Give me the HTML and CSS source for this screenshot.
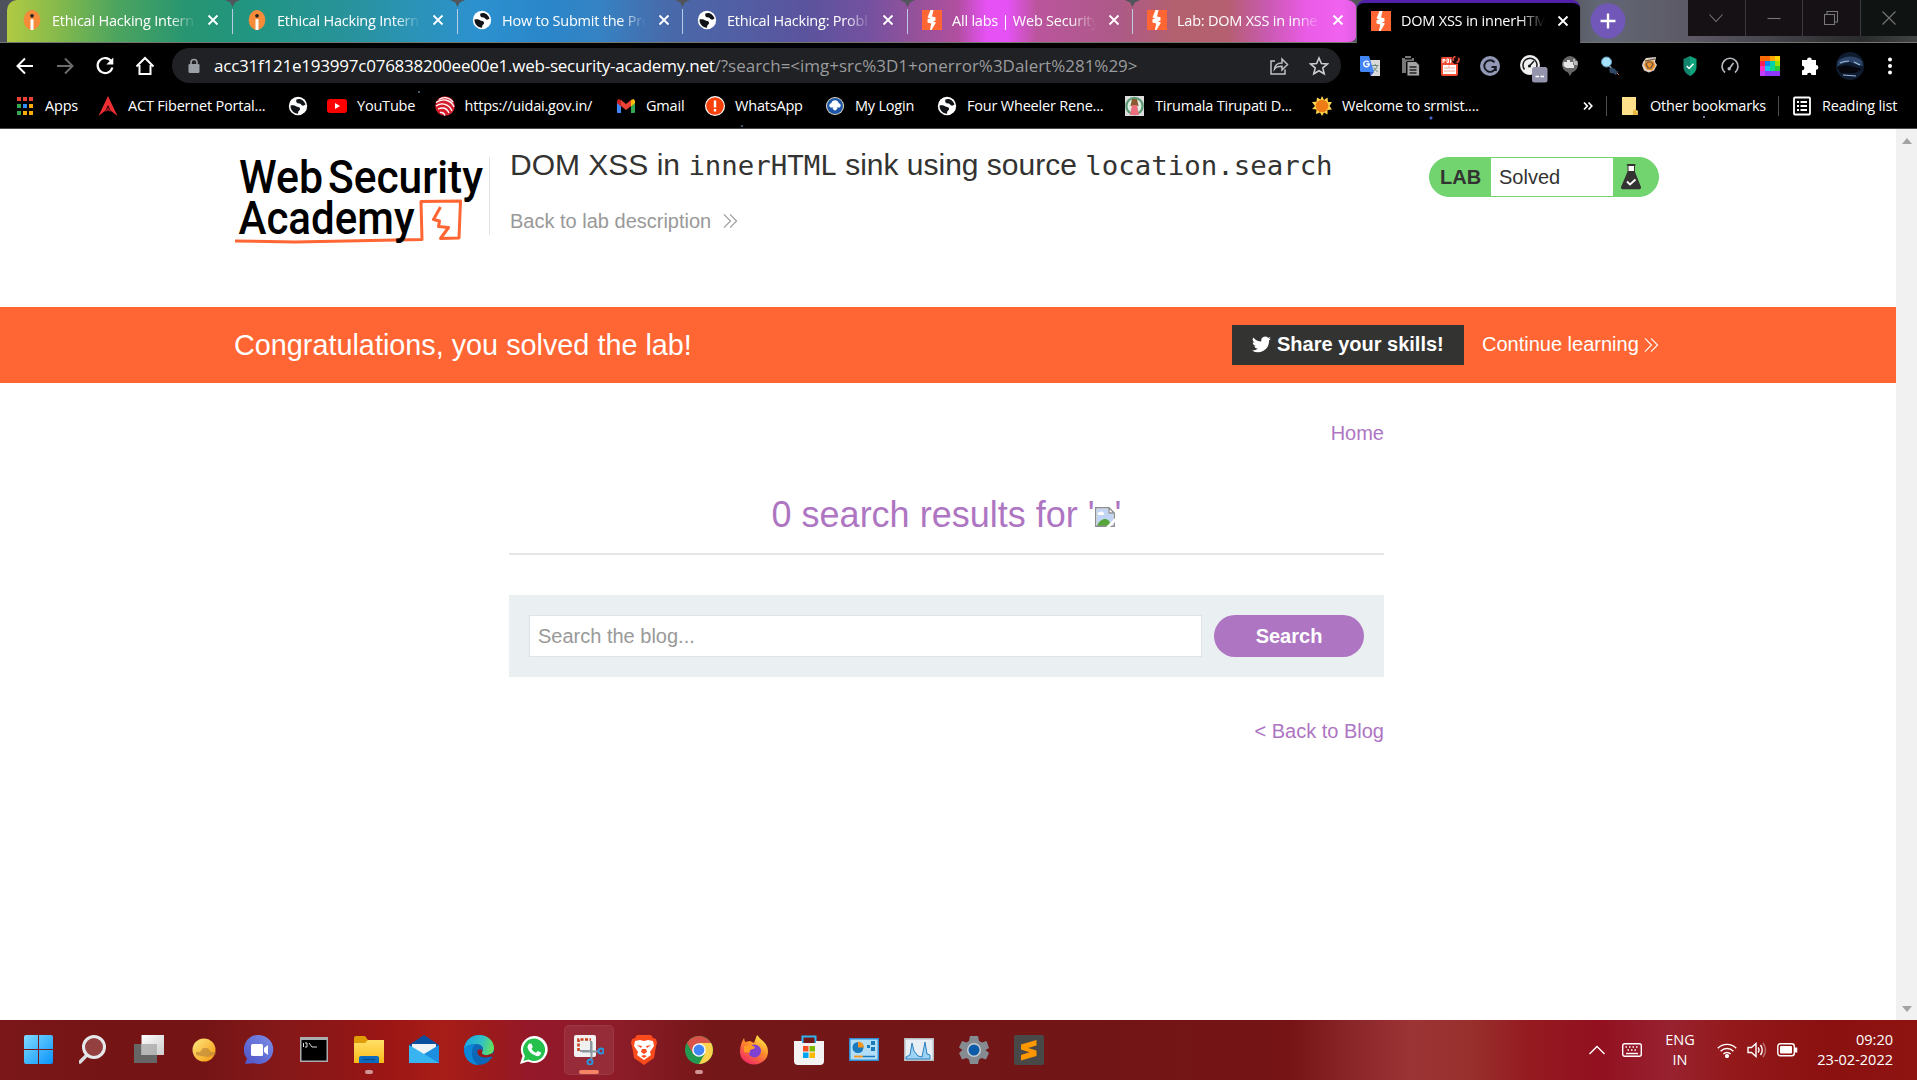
FILE: index.html
```html
<!DOCTYPE html>
<html lang="en">
<head>
<meta charset="utf-8">
<title>DOM XSS in innerHTML sink using source location.search</title>
<link rel="stylesheet" href="styles.css">
</head>
<body>
<svg class="defs" width="0" height="0">
  <defs>
    <linearGradient id="gwin" x1="0" y1="0" x2="1" y2="1"><stop offset="0" stop-color="#7fdcff"/><stop offset="1" stop-color="#0a93fb"/></linearGradient>
    <linearGradient id="gsun" x1="0" y1="0" x2="1" y2="1"><stop offset="0" stop-color="#ffe681"/><stop offset="1" stop-color="#f59a0c"/></linearGradient>
    <linearGradient id="gchat" x1="1" y1="0" x2="0" y2="1"><stop offset="0" stop-color="#7b8fe8"/><stop offset="1" stop-color="#4f52c4"/></linearGradient>
    <linearGradient id="gfold" x1="0" y1="0" x2="0" y2="1"><stop offset="0" stop-color="#ffe067"/><stop offset="1" stop-color="#fbbb18"/></linearGradient>
    <linearGradient id="gedge" x1="0" y1=".3" x2="1" y2=".5"><stop offset="0" stop-color="#1ca6e6"/><stop offset=".6" stop-color="#35c3c0"/><stop offset="1" stop-color="#66e05a"/></linearGradient>
    <linearGradient id="gfox" x1=".8" y1="0" x2=".2" y2="1"><stop offset="0" stop-color="#fff04a"/><stop offset=".45" stop-color="#ff8a2a"/><stop offset="1" stop-color="#f0206a"/></linearGradient>
    <linearGradient id="gtask" x1="0" y1="0" x2="1" y2="1"><stop offset="0" stop-color="#fff"/><stop offset="1" stop-color="#ccc"/></linearGradient>
    <symbol id="burp" viewBox="0 0 20 20"><path fill="#f63" d="M0 0h20v20H0z"/><path fill="#fff" d="M8.500 0h3L10 6.500l3.500.7v3.300l-2.500 1L14 12.500 9.500 20H8l1.200-6.500-3.700-1V9.200l2.700-1L5.500 7.500z"/></symbol>
    <symbol id="globe" viewBox="0 0 20 20"><circle cx="10" cy="10" r="9.200" fill="#fff"/><path fill="#101418" d="M8.500 3.500C11 2 16 3.500 17.500 8.500c-1.500 1.500-3.500 1.500-4.500 0-.5-1.200-3.500-.3-4.500-2.200-.3-1-.5-2 0-2.800zM2.500 9.500c2.500-.8 5 0 6.500 1.300 2 .2 3.500 1.200 3 2.700-.5 1-1.700 1.200-1.800 2.500l-.2 1.800C5.500 17.500 2.500 14 2.500 9.500z"/></symbol>
    <symbol id="intern" viewBox="0 0 20 24"><ellipse cx="10" cy="12" rx="10" ry="12" fill="#f68b3a"/><circle cx="10" cy="7" r="2.200" fill="#222"/><path fill="#fff" d="M8.200 11h3.600v13H8.200z"/></symbol>
    <symbol id="x" viewBox="0 0 12 12"><path d="M1.500 1.500l9 9m0-9l-9 9" stroke="#fff" stroke-width="1.800" fill="none"/></symbol>
  </defs>
</svg>

<div class="tabstrip">
  <div class="tabs">
    <div class="tab"><svg class="fav"><use href="#intern"/></svg><span class="title">Ethical Hacking Intern</span><svg class="close"><use href="#x"/></svg></div>
    <div class="tab"><svg class="fav"><use href="#intern"/></svg><span class="title">Ethical Hacking Intern</span><svg class="close"><use href="#x"/></svg></div>
    <div class="tab"><svg class="fav"><use href="#globe"/></svg><span class="title">How to Submit the Pro</span><svg class="close"><use href="#x"/></svg></div>
    <div class="tab"><svg class="fav"><use href="#globe"/></svg><span class="title">Ethical Hacking: Probl</span><svg class="close"><use href="#x"/></svg></div>
    <div class="tab"><svg class="fav"><use href="#burp"/></svg><span class="title">All labs | Web Security</span><svg class="close"><use href="#x"/></svg></div>
    <div class="tab"><svg class="fav"><use href="#burp"/></svg><span class="title">Lab: DOM XSS in inne</span><svg class="close"><use href="#x"/></svg></div>
  </div>
  <div class="tab active"><svg class="fav"><use href="#burp"/></svg><span class="title">DOM XSS in innerHTM</span><svg class="close"><use href="#x"/></svg></div>
  <svg class="newtab" viewBox="0 0 36 36"><circle cx="18" cy="18" r="17.500" fill="#7057b8"/><path d="M10.500 18h15M18 10.500v15" stroke="#fff" stroke-width="2.400"/></svg>
  <div class="winbtns">
    <div><svg width="14" height="12" viewBox="0 0 14 12"><path d="M.5 2.500 7 9.500l6.500-7"/></svg></div>
    <div><svg width="14" height="12" viewBox="0 0 14 12"><path d="M.5 6.500h13"/></svg></div>
    <div><svg width="14" height="14" viewBox="0 0 14 14"><path d="M.5 3.500h10v10H.5zM3 3.500V.500h10.500V11h-3"/></svg></div>
    <div><svg width="14" height="14" viewBox="0 0 14 14"><path d="M.5.500l13 13m0-13l-13 13"/></svg></div>
  </div>
</div>

<div class="toolbar">
  <div class="nav">
    <svg viewBox="0 0 20 20"><path d="M18 10H3M10 2.500 2.500 10l7.500 7.500" stroke="#fff" stroke-width="2" fill="none"/></svg>
    <svg viewBox="0 0 20 20"><path d="M2 10h15M10 2.500l7.500 7.500-7.500 7.500" stroke="#6c6c6c" stroke-width="2" fill="none"/></svg>
    <svg viewBox="0 0 20 20"><path d="M16.300 5.200A7.500 7.500 0 1 0 17.400 11.500" stroke="#fff" stroke-width="2.200" fill="none"/><path d="M18.300 1.500v7h-7z" fill="#fff"/></svg>
    <svg viewBox="0 0 20 20"><path d="M4.500 9v9h11V9M1.500 10.500 10 2l8.500 8.500" stroke="#fff" stroke-width="2" fill="none"/></svg>
  </div>
  <div class="omnibox">
    <svg class="lock" viewBox="0 0 12 16"><path d="M3 7V4.500a3 3 0 0 1 6 0V7" fill="none" stroke="#9aa0a6" stroke-width="1.600"/><rect x=".5" y="6" width="11" height="9" rx="1.300" fill="#9aa0a6"/></svg>
    <span class="url"><span class="host">acc31f121e193997c076838200ee00e1.web-security-academy.net</span><span class="path">/?search=&lt;img+src%3D1+onerror%3Dalert%281%29&gt;</span></span>
    <svg class="share" viewBox="0 0 20 20"><path d="M6 5H2v13h14v-4.500M5.500 13c.5-4.500 3.500-6 7.500-6V3l5.500 5.500L13 14v-3.700c-4 0-6 .7-7.500 2.700z" fill="none" stroke="#bdc1c6" stroke-width="1.500"/></svg>
    <svg class="star" viewBox="0 0 20 20"><path d="M10 2l2.400 5.500 6 .5-4.600 3.900 1.400 5.900L10 14.700l-5.200 3.100 1.400-5.900L1.600 8l6-.5z" fill="none" stroke="#c8cbd0" stroke-width="1.600"/></svg>
  </div>
  <div class="exts">
    <svg viewBox="0 0 20 20"><path fill="#dadada" d="M7 4h13v16H11z"/><path d="M12 9.500h6.500M15.300 8v1.500m2 0c-.5 3-2.500 5-5 6m1.500-4c.8 2 2.200 3.200 4 4" stroke="#687" fill="none"/><path fill="#4285f4" d="M0 0h9l5 16H1.500Q0 16 0 14.500z"/><path fill="#3157c9" d="M9.500 16H14l-3.500 4z"/><path d="M8.700 6.200A2.800 2.800 0 1 0 9.300 8H6.500" stroke="#fff" stroke-width="1.400" fill="none"/></svg>
    <svg viewBox="0 0 20 20"><path fill="#777" d="M2 2h3V0h6v2h3v4H6v11H2z"/><path fill="#111" d="M5 2h7v1.500H5z"/><path fill="#a4a4a4" stroke="#111" d="M7 5.500h9l3.500 3.500v11H7z"/><path d="M9.500 11h7M9.500 14h7M9.500 17h7" stroke="#222" stroke-width="1.300"/></svg>
    <svg viewBox="0 0 20 20"><rect x="1" y="1" width="17" height="19" rx="2" fill="#f04e37"/><path fill="#fff" d="M3 9h13v9H3z"/><path d="M4 12h11M4 15h11M9 9v3" stroke="#f7a79b"/><path d="M3 3v4M3 3.500h2v1.500H3M7 3v3.500h1.500V3zM10.500 7V3.500h2M10.500 5h2" stroke="#fff" fill="none"/><circle cx="16" cy="3.500" r="4.500" fill="#180505"/><path d="M13.500 5c-1-2 0-4 2-4.500M18.500 2c1 2 0 4-2 4.500" stroke="#e34a36" stroke-width="1.700" fill="none"/></svg>
    <svg viewBox="0 0 20 20"><circle cx="10" cy="10" r="10" fill="#9298b5"/><path d="M14.500 6.300A5.800 5.800 0 1 0 15.800 11h-4.300M15.800 11v4" stroke="#151823" stroke-width="1.900" fill="none"/></svg>
    <svg class="wide" viewBox="0 0 28 28"><circle cx="10" cy="10" r="10" fill="#f0f0f0"/><path d="M4.500 14.500A7 7 0 1 1 15.500 14.500M9.500 11l4.500-5" stroke="#16191c" stroke-width="1.500" fill="none"/><circle cx="9.500" cy="11" r="1.600" fill="#16191c"/><rect x="12" y="12" width="15.500" height="15.500" rx="2.500" fill="#9495ad"/><path d="M15.500 21.500h3.500M20.500 21.500H24" stroke="#fff" stroke-width="1.700"/></svg>
    <svg viewBox="0 0 20 20"><path fill="#666" d="M10 0a9 8.500 0 0 1 2 16.500L10 20l-2-3.500A9 8.500 0 0 1 10 0z"/><path fill="#e5e5e5" d="M3.500 6H7V4h3v2h3v3h1v3H6.500L3.500 10z"/><path fill="#bbb" d="M13 3h2v2h2.500v4H14z"/></svg>
    <svg viewBox="0 0 20 20"><circle cx="6.500" cy="6" r="5" fill="#a5e1fb" stroke="#6599b8"/><path d="M9.500 10l2 2.500" stroke="#8b9aa5" stroke-width="1.500"/><path fill="#2f4965" d="M9 13l3-1.500 3 1.500 2 2.500h2l-2 1.500-1 2.500-2-2-4-.5z"/><path d="M17 17l2 2" stroke="#d66b32"/></svg>
    <svg viewBox="0 0 20 20"><path fill="#e0d2c2" d="M3 6l3-4 5-.500 5-.500-1 5 2 3-3 5.500-5 2-5-2-2-5z"/><path d="M6 4l7.500 1 2 5-3.500 4.500-5.500-1L4 9z" fill="#ec932f"/><path d="M6 8c2-3 5-3 7 0l-2 4H8zM5 5l10-2" stroke="#5f5045" stroke-width="1.200" fill="none"/></svg>
    <svg viewBox="0 0 20 20"><path fill="#0ea37a" d="M10 0l6.500 3v8c0 4.500-3 7-6.500 9z"/><path fill="#12836c" d="M10 0L3.500 3v8c0 4.500 3 7 6.500 9z"/><path d="M6.700 10l2.400 2.500 4.400-4.800" stroke="#fff" stroke-width="1.500" fill="none"/></svg>
    <svg viewBox="0 0 20 20"><path d="M5 16.500A8 8 0 1 1 15 16.500M9 13l4.500-6" stroke="#b5b8be" stroke-width="1.700" fill="none"/><circle cx="9.200" cy="12.800" r="1.700" fill="#b5b8be"/></svg>
    <svg viewBox="0 0 20 20"><path fill="#f22" d="M0 0h5v5H0z"/><path fill="#ff6a00" d="M0 0h10v5H0z"/><path fill="#ffa800" d="M10 0h5v5h-5z"/><path fill="#ffd400" d="M15 0h5v5h-5z"/><path fill="#ff1d55" d="M0 5h5v5H0z"/><path fill="#0a84ff" d="M5 5h5v5H5z"/><path fill="#00cfae" d="M10 5h5v5h-5z"/><path fill="#98e000" d="M15 5h5v5h-5z"/><path fill="#f72bc5" d="M0 10h5v5H0z"/><path fill="#17bdf4" d="M5 10h5v5H5z"/><path fill="#0bd98c" d="M10 10h5v5h-5z"/><path fill="#29cd33" d="M15 10h5v5h-5z"/><path fill="#c43dff" d="M0 15h5v5H0z"/><path fill="#8f36ff" d="M5 15h15v5H5z"/></svg>
    <svg viewBox="0 0 20 20"><path fill="#fff" d="M2 4h5a2.400 2.400 0 0 1 4.800 0H16v5a2.400 2.400 0 0 1 0 4.800V19h-4.500a2.200 2.200 0 0 0-4.400 0H2v-4.500a2.400 2.400 0 0 0 0-4.800z"/></svg>
    <svg class="wide avatar" viewBox="0 0 28 28"><circle cx="14" cy="14" r="14" fill="#0f1b2e"/><path fill="#2c4468" d="M2 9C8 3 20 3 26 9l1 5-5-1-8-3-9 2-4 3z"/><path fill="#05070c" d="M1 15l9-2 16 4-7 4H5z"/><path d="M4 11c4-2 7-2 9-2M18 10l6 3M7 23l13 1" stroke="#9fb9dd" stroke-width="1.200" fill="none"/></svg>
    <svg viewBox="0 0 20 20"><circle cx="10" cy="3.500" r="2" fill="#fff"/><circle cx="10" cy="10" r="2" fill="#fff"/><circle cx="10" cy="16.500" r="2" fill="#fff"/></svg>
  </div>
</div>

<div class="bookmarks">
  <div class="bm"><svg viewBox="0 0 20 20"><path fill="#ea4335" d="M2 1h4v4H2zm6 0h4v4H8zm6 0h4v4h-4z"/><path fill="#34a853" d="M2 8h4v4H2zM2 15h4v4H2z"/><path fill="#2f8df5" d="M8 8h4v4H8z"/><path fill="#fbab05" d="M14 8h4v4h-4zM8 15h4v4H8zm6 0h4v4h-4z"/></svg><span>Apps</span></div>
  <div class="bm"><svg viewBox="0 0 20 20"><path fill="#ee2e33" d="M10 0l9.500 20-7-5.500L10 9l-2.500 5.500L.5 20z"/><path fill="#b3191f" d="M10 11l3 5-3-1.500L7 16z"/></svg><span>ACT Fibernet Portal...</span></div>
  <div class="bm"><svg><use href="#globe"/></svg></div>
  <div class="bm"><svg viewBox="0 0 20 20"><rect y="3" width="20" height="14" rx="3" fill="red"/><path fill="#fff" d="M8 7v6l5-3z"/></svg><span>YouTube</span></div>
  <div class="bm"><svg viewBox="0 0 20 20"><circle cx="10" cy="10" r="9.800" fill="#d3202c"/><path d="M1 6.500C8 1.500 16 4 19 11M1 10c6-4 13-2 16 5M3 13c5-2 9-.500 11 4M5 16.500c3-.500 4 .5 5 3M4 3.500C9 0 15 2 18 6" stroke="#fff" stroke-width="1.300" fill="none"/></svg><span>https://uidai.gov.in/</span></div>
  <div class="bm"><svg viewBox="0 0 20 20"><path fill="#4285f4" d="M1 5l4 3v9H2q-1 0-1-1z"/><path fill="#34a853" d="M19 5l-4 3v9h3q1 0 1-1z"/><path fill="#fbbc04" d="M15 4l2.500-1L19 4.500V7l-4 3.500z"/><path fill="#c5221f" d="M5 4L2.500 3 1 4.500V7l4 3.500z"/><path fill="#ea4335" d="M5 4l5 4 5-4v6l-5 4-5-4z"/></svg><span>Gmail</span></div>
  <div class="bm"><svg viewBox="0 0 20 20"><circle cx="10" cy="10" r="10" fill="#fff"/><circle cx="10" cy="10" r="8.800" fill="#f8400b"/><path fill="#fff" d="M8.800 4.500h2.400v7H8.800zM8.800 13h2.400v2.400H8.800z"/></svg><span>WhatsApp</span></div>
  <div class="bm"><svg viewBox="0 0 20 20"><circle cx="10" cy="10" r="9" fill="#e9ddc0"/><circle cx="10" cy="10" r="8" fill="#1d56a8"/><path fill="#fff" d="M5.500 11.500a2.300 2.300 0 0 1 .8-4.300 3.800 3.800 0 0 1 7.400 0 2.300 2.300 0 0 1 .8 4.300h-3l1 1.200-2.500 2-2.500-2 1-1.200z"/></svg><span>My Login</span></div>
  <div class="bm"><svg><use href="#globe"/></svg><span>Four Wheeler Rene...</span></div>
  <div class="bm"><svg viewBox="0 0 20 20"><path fill="#ddd" d="M0 0h19v20H0z"/><circle cx="9.500" cy="10" r="9.300" fill="#5f9b79"/><circle cx="9.500" cy="10" r="7" fill="#dcefe0"/><path fill="#8a5a31" d="M7 3h5l1.500 7h-8z"/><path fill="#ec6f7e" d="M7 9h5l2 10H5z"/></svg><span>Tirumala Tirupati D...</span></div>
  <div class="bm"><svg viewBox="0 0 20 20"><path fill="#ffd34d" d="M10 0l2 4 3.500-2.500.5 4.500 4 0-2.500 4 2.500 3.500-4.500.5 0 4.500-3.500-2L10 20l-2-3.500L4 18l.5-4.500L0 13l3-3L0 6l4.500-.2L5 1.500l3.500 2z"/><circle cx="10" cy="10" r="6.300" fill="#ef7d15"/></svg><span>Welcome to srmist....</span></div>
  <div class="more"><svg viewBox="0 0 10 10"><path d="M1 1.500 4.300 5 1 8.500M5.500 1.500 8.800 5 5.500 8.500" fill="none" stroke="#fff" stroke-width="1.700"/></svg></div>
  <div class="bm side"><svg viewBox="0 0 20 20"><path fill="#ffe08a" d="M2 1h14v13l2 1v4H2z"/><path fill="#e9b93f" d="M13 19v-4l3-2v4l2-3v5z"/></svg><span>Other bookmarks</span></div>
  <div class="bm side"><svg viewBox="0 0 20 20"><rect x="2" y="1.500" width="16" height="17" rx="1" fill="none" stroke="#fff" stroke-width="1.800"/><path d="M5 6h2M5 10h2M5 14h2M8.500 6H15M8.500 10H15M8.500 14H15" stroke="#fff" stroke-width="1.800"/></svg><span>Reading list</span></div>
</div>

<div class="viewport">
  <main class="page">
    <header class="labhead">
      <svg class="logo" width="256" height="95" viewBox="0 0 256 95">
        <path d="M0 90 60 91 187 88.500 186 50.500 225.500 50 224 87 205.500 87.500 213.500 76.500 203.500 75.500 204.500 70 198.500 68.500 205.500 56" class="mark"/>
        <text class="logotext" x="4" y="41.500" textLength="84" lengthAdjust="spacingAndGlyphs">Web</text>
        <text class="logotext" x="93" y="41.500" textLength="155" lengthAdjust="spacingAndGlyphs">Security</text>
        <text class="logotext" x="3.500" y="83" textLength="176" lengthAdjust="spacingAndGlyphs">Academy</text>
      </svg>
      <div class="headtext">
        <h2>DOM XSS in <code>innerHTML</code> sink using source <code>location.search</code></h2>
        <a class="back">Back to lab description <svg viewBox="0 0 16 16"><path d="M1 1l7 7-7 7M7.500 1l7 7-7 7"/></svg></a>
      </div>
      <div class="status">
        <span class="lab">LAB</span><span class="solved">Solved</span>
        <svg viewBox="0 0 20 26"><path fill="#fff" stroke="#333332" d="M7 1.500h6.500v6H7z"/><path fill="#333332" d="M5.800 0h8.700v1.500H5.800zM6.800 7h6.800L20 23q.3 2-1.500 2.200h-17Q-.3 25 0 23z"/><path d="M6 17.500l3 3 5.500-5" stroke="#fff" stroke-width="1.800" fill="none"/></svg>
      </div>
    </header>
    <section class="banner">
      <h4>Congratulations, you solved the lab!</h4>
      <button class="sharebtn"><svg viewBox="0 0 24 20"><path fill="#fff" d="M24 2.400a10 10 0 0 1-2.800.8A5 5 0 0 0 23.300.4a10 10 0 0 1-3.100 1.200 4.900 4.900 0 0 0-8.400 4.500A14 14 0 0 1 1.700 1a4.900 4.900 0 0 0 1.500 6.600A5 5 0 0 1 1 7a4.900 4.900 0 0 0 3.900 4.900 5 5 0 0 1-2.200.1 4.900 4.900 0 0 0 4.600 3.400A10 10 0 0 1 0 17.500 14 14 0 0 0 21.500 5a10 10 0 0 0 2.500-2.600z"/></svg>Share your skills!</button>
      <a class="continue">Continue learning <svg viewBox="0 0 16 16"><path d="M1 1l7 7-7 7M7.500 1l7 7-7 7"/></svg></a>
    </section>
    <section class="blog">
      <a class="home">Home</a>
      <h1>0 search results for '<svg viewBox="0 0 20 20"><path fill="#fff" d="M.5.500H14L19.500 6v14H.5z"/><path fill="#c3d5f5" d="M2 2h11v5h5v11H2z"/><path fill="#fff" d="M3 8a2 2 0 0 1 2-3 2.500 2.500 0 0 1 4 2q1 1 0 1z"/><path fill="#57a639" d="M2 19c2-5 5-7 8-7 3 0 5 2 6 7z"/><path fill="none" stroke="#8b8f94" stroke-width="1.400" d="M.7 19.300V.7H14l5.300 5.300v13.300zM14 .7V6h5.300"/><path fill="#fff" d="M20 11v4l-5 5h-4z"/></svg>'</h1>
      <form class="search"><input type="text" placeholder="Search the blog..."><button type="button">Search</button></form>
      <a class="backblog">&lt; Back to Blog</a>
    </section>
  </main>
  <div class="scroll"><svg viewBox="0 0 10 6"><path fill="#a3a3a3" d="M0 6l5-6 5 6z"/></svg><svg viewBox="0 0 10 6"><path fill="#a3a3a3" d="M0 0h10L5 6z"/></svg></div>
</div>

<div class="taskbar">
  <div class="apps">
    <div><svg viewBox="0 0 30 30"><path fill="url(#gwin)" d="M2 0h12v14H0V2q0-2 2-2zm13 0h12q2 0 2 2v12H15zM0 15h14v14H2q-2 0-2-2zm15 0h14v12q0 2-2 2H15z"/></svg></div>
    <div><svg viewBox="0 0 30 30"><path d="M9 19l-8 8" stroke="#d9dde0" stroke-width="3.500" stroke-linecap="round"/><circle cx="15" cy="12" r="10.500" fill="#944041" stroke="#e6e9eb" stroke-width="3"/></svg></div>
    <div><svg viewBox="0 0 30 30"><path fill="#666" d="M0 9h23v19H0z"/><path fill="url(#gtask)" d="M7.500 0H30v20H7.500z"/><path fill="#aaa" opacity=".8" d="M7.500 9H23v11H7.500z"/></svg></div>
    <div><svg viewBox="0 0 30 30"><circle cx="15" cy="15" r="11.500" fill="url(#gsun)"/><path fill="#b98437" opacity=".65" d="M7 17h4l3-4h5l3 4h5l-1 2h2l-6 2-3 1-7-1-5-1z"/></svg></div>
    <div><svg viewBox="0 0 30 30"><path fill="url(#gchat)" d="M15 0a14.500 14.500 0 1 1-5 28.200L1 29l2-5.500A14.500 14.500 0 0 1 15 0z"/><rect x="7" y="9" width="12" height="12" rx="1.500" fill="#fff"/><path fill="#fff" d="M20 13l4-3v10l-4-3z"/></svg></div>
    <div><svg viewBox="0 0 30 30"><path fill="#a9adb0" d="M1 2h28v25H1z"/><path d="M2.500 5h25v20.500h-25z"/><path d="M4.500 8v4M6 8h2v4H6M10 8l3 4M13 12h5" stroke="#ddd" stroke-width="1" fill="none"/></svg></div>
    <div class="run"><svg viewBox="0 0 30 30"><path fill="#e09c06" d="M0 3q0-2 2-2h9l3 4v4H0z"/><path fill="url(#gfold)" d="M0 8h11l3-3h16v23H0z"/><path fill="#0b6bc0" d="M5 28v-5q0-2 2-2h16q2 0 2 2v5z"/><path d="M9 24.500h12" stroke="#0a4c8c" stroke-width="1.500"/></svg></div>
    <div><svg viewBox="0 0 30 30"><path fill="#0b4f9e" d="M0 10L15 0l15 10v8H0z"/><path fill="#f1f3f5" d="M3 9h24v8l-12 7-12-7z"/><path fill="#1c8fe0" d="M30 10v18H0z"/><path fill="#38b5f1" d="M0 10l30 18H0z"/></svg></div>
    <div><svg viewBox="0 0 30 30"><circle cx="15" cy="15" r="15" fill="#0d67b8"/><path fill="url(#gedge)" d="M0 14C1 5 8 0 15 0c9 0 15 6 15 13 0 5-4 7-8 7-3 0-5-1-4-3 3-5-1-8-6-8C6 9 1 12 0 14z"/><path fill="#0b86d8" d="M0 14c3-5 8-5 11-4-5 4-4 15 3 20C6 30 0 23 0 14z"/><path fill="#9c1817" d="M14 14.500c-3 6 5 10 13 7l1.500.5L30 17c-4 4-12 4-12 1 0-1 1-2 0-3.500z"/></svg></div>
    <div><svg viewBox="0 0 30 30"><path fill="#fff" d="M15 1a13.500 13.500 0 1 1-6 25.500L1 29l2.500-8A13.500 13.500 0 0 1 15 1z"/><path fill="#25c14c" d="M15 3.500a11.200 11.200 0 1 1-5.500 21L4.500 26l1.500-5A11.200 11.200 0 0 1 15 3.500z"/><path fill="#fff" d="M10.500 8.500l2 .2 1.300 3.300-1.300 1.800c1 2 2.500 3.200 4.500 4l1.800-1.900 3.200 1.700c0 3-2.500 4-4.500 3.500-5-1.500-8-4.500-9-8.500 0-2 1-3.500 2-4.100z"/></svg></div>
    <div class="run on"><svg viewBox="0 0 30 30"><rect width="22" height="22" rx="2" fill="#f1f1f1"/><path d="M4.500 16V4.500H17" stroke="#c8401c" stroke-width="2.600" stroke-dasharray="3 1.500" fill="none"/><path d="M6 16h12M17 6v12M8 16.500h17M17.500 7v18" stroke="#8c979f" stroke-width="2" fill="none"/><circle cx="27" cy="16" r="2.500" fill="none" stroke="#2a95df" stroke-width="2"/><circle cx="16" cy="27" r="2.500" fill="none" stroke="#2a95df" stroke-width="2"/></svg></div>
    <div><svg viewBox="0 0 30 30"><path fill="#fb4a1c" d="M8 0h14l2 3 3 1 1 4-1 3-2 12-10 7-10-7L3 11 2 8l1-4 3-1z"/><path fill="#fff" d="M6 6l5-1 4 1 4-1 5 1 1 5-4 6 1 3-7 5-7-5 1-3-4-6z"/><path fill="#fb4a1c" d="M8 10l5 1-1 2zM22 10l-5 1 1 2zM13 14h4l1 3-3 2-3-2zM12 21l3-1 3 1-3 2z"/></svg></div>
    <div class="run"><svg viewBox="0 0 30 30"><circle cx="15" cy="15" r="14" fill="#249a50"/><path fill="#d9534a" d="M2.900 8A14 14 0 0 1 27.100 8H15l-6 10.500z"/><path fill="#fcd34c" d="M27.100 8A14 14 0 0 1 15 29l6-10.500L15 8z"/><circle cx="15" cy="15" r="6.800" fill="#fff"/><circle cx="15" cy="15" r="5.400" fill="#4285f4"/></svg></div>
    <div><svg viewBox="0 0 30 30"><path fill="url(#gfox)" d="M18 0c2 2 3 4 6 6 4 4 5 7 5 11a14 12.500 0 0 1-28 0c0-5 1-9 4-14l1 4 5-1 4 2z"/><circle cx="15.500" cy="16" r="6.500" fill="#8040d0"/><path fill="#ff9a24" d="M5 11l7-1 4 2-1 2c-3 0-5 1-4 4l-6-1z"/></svg></div>
    <div><svg viewBox="0 0 30 30"><path d="M8.500 9V1.500h13V9" stroke="#31b4ee" stroke-width="2" fill="none"/><path fill="#f3f3f3" d="M0 6h8v2h14V6h8v20q0 4-4 4H4q-4 0-4-4z"/><path fill="#f25022" d="M9 11h5.500v5.500H9z"/><path fill="#7fba00" d="M15.500 11H21v5.500h-5.500z"/><path fill="#00a4ef" d="M9 17.500h5.500V23H9z"/><path fill="#ffb900" d="M15.500 17.500H21V23h-5.500z"/></svg></div>
    <div><svg viewBox="0 0 30 30"><path fill="#b2def5" stroke="#2e8ed6" stroke-width="1.500" d="M.8 3.800h28.500v21.500H.8z"/><circle cx="9" cy="12.500" r="5.500" fill="#1779be"/><path fill="#f7941d" d="M9 6.500a6 6 0 0 1 6 6H9z"/><path fill="#1779be" d="M18 10h3v3h-3zM22 6h4v4h-4zM22 12h4v4h-4z"/><path d="M5 21.500h9" stroke="#f7941d" stroke-width="1.800"/><path d="M14 21.500h12" stroke="#1779be" stroke-width="1.500"/></svg></div>
    <div><svg viewBox="0 0 30 30"><path fill="#e8eff4" stroke="#b6bcc1" stroke-width="1.500" d="M.8 3.800h28.500v21.500H.8z"/><path fill="#9bd4f5" stroke="#2c7fbd" d="M2 22l4-2 2-12 2 8 4 5 4 1 3-15 2 12 3 1v4H2z"/></svg></div>
    <div><svg viewBox="0 0 30 30"><path fill="#858b91" d="M11 1h8l1 5 3 1.500L27.500 6l2.500 7-3.500 2L30 18l-3 6.500-4.500-1.500L20 24.500 19 29h-8l-1-4.500L7.500 23 3 24.500 0 18l3.500-3L0 12.500 3 6l4.500 1.500L10 6z"/><circle cx="15" cy="15" r="7" fill="#c7ccd0"/><circle cx="15" cy="15" r="5.500" fill="#0b5ba8"/></svg></div>
    <div><svg viewBox="0 0 30 30"><rect width="30" height="30" rx="2" fill="#484848"/><path fill="#ff9800" d="M22.500 5v5.500L14 13l8.500 2.500V21L7 25.500V20l8.500-2.700L7 14.500V9.500z"/></svg></div>
  </div>
  <div class="tray">
    <svg class="chev" width="16" height="10" viewBox="0 0 16 10"><path d="M.5 9 8 1.500 15.500 9"/></svg>
    <svg class="kbd" width="20" height="14" viewBox="0 0 20 14"><rect x=".7" y=".7" width="18.600" height="12.600" rx="2"/><path d="M4 10.500h12" /><path d="M3.500 4h13M5.500 7h10" stroke-dasharray="1.500 2"/></svg>
    <div class="lang"><span>ENG</span><span>IN</span></div>
    <div class="sys">
      <svg width="20" height="16" viewBox="0 0 20 16"><path d="M.8 6.200a13 13 0 0 1 18.400 0M3.600 9.200a9 9 0 0 1 12.800 0M6.400 12a5 5 0 0 1 7.200 0"/><circle cx="10" cy="14" r="1.400" fill="#fff"/></svg>
      <svg width="20" height="16" viewBox="0 0 20 16"><path d="M1 5.500h3.500L9 1.500v13l-4.500-4H1zM11 5.500q2 2.500 0 5M13.500 3q3.500 5 0 10"/><path d="M16 1q5 7 0 14" opacity=".4"/></svg>
      <svg width="21" height="14" viewBox="0 0 21 14"><rect x=".8" y=".8" width="16.500" height="12" rx="2.500"/><rect x="3" y="3" width="12" height="7.600" rx="1" fill="#fff" stroke="none"/><path d="M19 4.500v5" stroke-width="2.500"/></svg>
    </div>
    <div class="clock"><span>09:20</span><span>23-02-2022</span></div>
  </div>
</div>
</body>
</html>
```

FILE: styles.css
```css
* { box-sizing: border-box; }
body {
  margin: 0;
  width: 1917px;
  height: 1080px;
  overflow: hidden;
  display: flex;
  flex-direction: column;
  background: #fff;
  font-family: "Liberation Sans", Arial, sans-serif;
}
svg { display: block; flex: none; }
.defs { position: absolute; }

/* Tab strip */
.tabstrip {
  height: 43px;
  flex: none;
  display: flex;
  padding-left: 7px;
  border-bottom: 1px solid #73766f;
  background: linear-gradient(90deg, #4e525c 0, #53565c 1560px, #626775 1600px, #5d5966 1690px, #2a2b2c 1860px, #424444 1917px);
  font-family: "Open Sans", "Noto Sans", sans-serif;
  font-size: 14.500px;
  letter-spacing: -0.220px;
  color: #fff;
}
.tabs {
  display: flex;
  width: 1350px;
  border-radius: 10px 10px 8px 0;
  background: linear-gradient(90deg, #b1ca43 0, #86ba4b 50px, #4ca45f 110px, #279571 180px, #219580 240px, #28939b 340px, #2b93b8 410px, #2c91cf 470px, #2a86c9 540px, #3583c4 590px, #486aaa 660px, #5060a4 720px, #5b539d 800px, #7351a0 860px, #96529a 910px, #b04f9e 950px, #e651f5 980px, #e651f5 1000px, #ba559c 1030px, #ad5a88 1110px, #b3616e 1170px, #b55f70 1220px, #c95ab0 1260px, #ea5be6 1300px, #f063f0 1335px, #e05be0 1350px);
}
.tab {
  position: relative;
  width: 225px;
  padding: 0 13px 2px 15px;
  display: flex;
  align-items: center;
}
.tabs .tab + .tab::before {
  content: "";
  position: absolute;
  left: 0;
  top: 9px;
  width: 1px;
  height: 25px;
  background: #b9cbe6;
}
.tabs .tab + .tab::after {
  content: "";
  position: absolute;
  left: -7px;
  top: 0;
  width: 15px;
  height: 7px;
  background: #50545b;
  clip-path: polygon(0 0, 100% 0, 65% 35%, 50% 100%, 35% 35%);
}
.fav { width: 20px; height: 20px; margin-right: 10px; }
.title {
  width: 146px;
  white-space: nowrap;
  -webkit-mask-image: linear-gradient(90deg, #000 118px, transparent 144px);
  mask-image: linear-gradient(90deg, #000 118px, transparent 144px);
}
.close { width: 12px; height: 12px; margin-left: 10px; }
.tab.active {
  width: 223px;
  height: 43px;
  margin-bottom: -1px;
  padding-left: 14px;
  padding-bottom: 5px;
  background: #000;
  border-top: 3px solid #5220a8;
  border-radius: 8px 8px 0 0;
  box-shadow: 0 0 0 1px #55585c;
  clip-path: inset(0 -2px 0 -2px);
}
.newtab { width: 36px; height: 36px; margin: 3px 0 0 10px; }
.winbtns { display: flex; height: 36px; margin-left: 62px; flex: 1; }
.winbtns div {
  flex: 1;
  display: flex;
  align-items: center;
  justify-content: center;
  background: #151114;
  border-right: 1px solid #3c3a3e;
}
.winbtns div:last-child { border: 0; background: #0f1311; }
.winbtns path { fill: none; stroke: #77767a; stroke-width: 1.100; }

/* Toolbar */
.toolbar {
  height: 45px;
  flex: none;
  display: flex;
  align-items: center;
  padding-left: 14px;
  background: #000;
}
.nav { display: flex; gap: 20px; width: 158px; padding-left: 1px; }
.nav svg { width: 20px; height: 20px; }
.omnibox {
  width: 1169px;
  height: 35px;
  border-radius: 18px;
  background: #202124;
  display: flex;
  align-items: center;
  padding-left: 16px;
}
.lock { width: 12px; height: 16px; }
.url {
  width: 1056px;
  margin-left: 14px;
  white-space: nowrap;
  font-family: "Open Sans", "Noto Sans", sans-serif;
  font-size: 17px;
  line-height: 24px;
}
.host { color: #fff; letter-spacing: -0.230px; }
.path { color: #9a9b9d; letter-spacing: -0.010px; }
.share { width: 20px; height: 20px; margin-left: -1px; }
.star { width: 20px; height: 20px; margin-left: 20px; }
.exts { display: flex; gap: 20px; padding-left: 19px; align-items: center; }
.exts svg { width: 20px; height: 20px; }
.exts .wide { width: 28px; height: 28px; margin: 7px -8px 0 0; }
.exts .avatar { margin: 0 -4px; }

/* Bookmarks */
.bookmarks {
  height: 41px;
  flex: none;
  display: grid;
  grid-template-columns: 83px 189.500px 39.500px 107.500px 181.500px 89px 120px 112px 188px 187px 268px 26px 172px 138px;
  align-items: center;
  padding: 0 0 5px 15px;
  border-bottom: 1px solid #4a4a4a;
  background:
    radial-gradient(circle 2px at 1431px 30px, #46c 50%, transparent 100%),
    radial-gradient(circle 1.500px at 419px 4px, #456 50%, transparent 100%),
    radial-gradient(circle 1.500px at 742px 38px, #456 50%, transparent 100%),
    radial-gradient(circle 1.500px at 1704px 29px, #78a 50%, transparent 100%),
    #000;
  font-family: "Open Sans", "Noto Sans", sans-serif;
  font-size: 14.500px;
  letter-spacing: -0.200px;
  color: #fff;
}
.bm { display: flex; align-items: center; gap: 10px; white-space: nowrap; }
.bm svg { width: 20px; height: 20px; }
.more svg { width: 10px; height: 10px; margin-left: 3px; }
.side { height: 20px; padding-left: 13px; border-left: 1px solid #4c4d50; }

/* Page */
.viewport { flex: 1; display: flex; min-height: 0; }
.page { width: 1896px; }
.scroll {
  width: 21px;
  background: #f1f1f1;
  display: flex;
  flex-direction: column;
  align-items: center;
  justify-content: space-between;
  padding: 9px 0 8px;
}
.scroll svg { width: 10px; height: 6px; }
.labhead { height: 178px; padding: 28px 237px 0 235px; display: flex; align-items: flex-start; }
.logo { width: 256px; height: 95px; overflow: visible; margin-top: -6px; }
.logotext { font-family: Roboto, sans-serif; font-weight: 500; font-size: 46px; fill: #000; }
.mark { fill: none; stroke: #f63; stroke-width: 3; stroke-linejoin: round; }
.headtext {
  height: 78px;
  margin-left: -2px;
  padding-left: 20px;
  border-left: 1px solid #e3e3e3;
  width: 940px;
}
h2 {
  margin: -10px 0 0;
  font-weight: 400;
  font-size: 30px;
  line-height: 36px;
  color: #333332;
  white-space: nowrap;
}
h2 code { font: 27.400px "DejaVu Sans Mono", monospace; line-height: 1; }
.back {
  margin-top: 26px;
  display: flex;
  align-items: center;
  gap: 12px;
  font-size: 20px;
  line-height: 24px;
  color: #999;
}
.back svg, .continue svg { width: 15px; height: 16px; }
.back path, .continue path { fill: none; stroke: currentColor; stroke-width: 1.200; }
.status {
  width: 230px;
  height: 40px;
  display: flex;
  align-items: center;
  border: 1px solid #72d46f;
  border-radius: 20px;
  background: #72d46f;
  color: #333332;
  font-size: 20px;
  overflow: hidden;
}
.lab { width: 61px; padding-left: 10px; font-weight: 700; }
.solved { width: 122px; height: 38px; line-height: 38px; padding-left: 8px; background: #fff; }
.status svg { width: 20px; height: 26px; margin-left: 8px; }
.banner {
  height: 76px;
  padding: 0 237px 0 234px;
  display: flex;
  align-items: center;
  background: #f63;
  color: #fff;
}
h4 { margin: 0 auto 0 0; font-weight: 400; font-size: 28.800px; }
.sharebtn {
  width: 232px;
  height: 40px;
  border: 0;
  background: #333332;
  color: #fff;
  font: 700 20px "Liberation Sans", Arial, sans-serif;
  display: flex;
  align-items: center;
  padding: 0 0 0 20px;
  gap: 6px;
  margin-top: -1px;
  white-space: nowrap;
}
.sharebtn svg { width: 19px; height: 17px; }
.continue {
  width: 177px;
  margin: -1px 0 0 18px;
  display: flex;
  align-items: center;
  justify-content: space-between;
  font-size: 20px;
  white-space: nowrap;
}
.blog {
  width: 875px;
  margin-left: 509px;
  display: flex;
  flex-direction: column;
  font-size: 20px;
  line-height: 24px;
  color: #ae75c2;
}
.home { align-self: flex-end; margin-top: 38px; }
h1 {
  margin: 47px 0 0;
  height: 63px;
  border-bottom: 2px solid #e5e5e5;
  font-weight: 400;
  font-size: 36px;
  line-height: 46px;
  text-align: center;
}
h1 svg { display: inline-block; width: 20px; height: 20px; vertical-align: baseline; }
.search {
  margin-top: 40px;
  height: 82px;
  padding: 20px;
  display: flex;
  gap: 12px;
  background: #eaeff2;
}
.search input {
  width: 673px;
  height: 42px;
  border: 1px solid #e0e3e6;
  padding: 0 8px;
  font: 20px "Liberation Sans", Arial, sans-serif;
}
.search input::placeholder { color: #999; opacity: 1; }
.search button {
  width: 150px;
  height: 42px;
  border: 0;
  border-radius: 21px;
  background: #ae75c2;
  color: #fff;
  font: 700 20px "Liberation Sans", Arial, sans-serif;
}
.backblog { align-self: flex-end; margin-top: 42px; }

/* Taskbar */
.taskbar {
  height: 60px;
  flex: none;
  display: flex;
  justify-content: space-between;
  background: linear-gradient(90deg, #7b1718 0, #741415 120px, #741415 200px, #831819 270px, #8f1616 340px, #9c1615 390px, #a81d17 440px, #9c1a1c 490px, #94182a 530px, #8c1c28 620px, #741718 710px, #721516 1100px, #761415 1290px, #8a2528 1350px, #9b3435 1410px, #98302d 1470px, #951a20 1530px, #921020 1600px, #982230 1670px, #93191a 1730px, #8a1110 1830px, #8e1412 1917px);
}
.apps { display: flex; padding: 5px 0 0 14px; gap: 5px; }
.apps div {
  width: 50px;
  height: 50px;
  display: flex;
  flex-direction: column;
  align-items: center;
  padding-top: 10px;
}
.apps svg { width: 30px; height: 30px; }
.run::after {
  content: "";
  width: 8px;
  height: 4px;
  margin-top: 5px;
  border-radius: 2px;
  background: #cf9597;
}
.apps .on { background: rgba(255, 255, 255, .08); border-radius: 5px; box-shadow: inset 0 0 0 1px rgba(255, 255, 255, .06); }
.on::after { width: 20px; background: #f58465; }
.tray {
  display: flex;
  align-items: center;
  padding-right: 24px;
  color: #fff;
  font: 14.500px/20px "Open Sans", "Noto Sans", sans-serif;
  letter-spacing: 0;
}
.tray svg { fill: none; stroke: #fff; stroke-width: 1.400; }
.kbd { margin-left: 17px; }
.lang { width: 40px; margin-left: 18px; display: flex; flex-direction: column; align-items: center; }
.sys { display: flex; align-items: center; gap: 10px; margin-left: 17px; }
.clock { width: 86px; margin-left: 9px; margin-top: -1px; display: flex; flex-direction: column; align-items: flex-end; white-space: nowrap; }
```
